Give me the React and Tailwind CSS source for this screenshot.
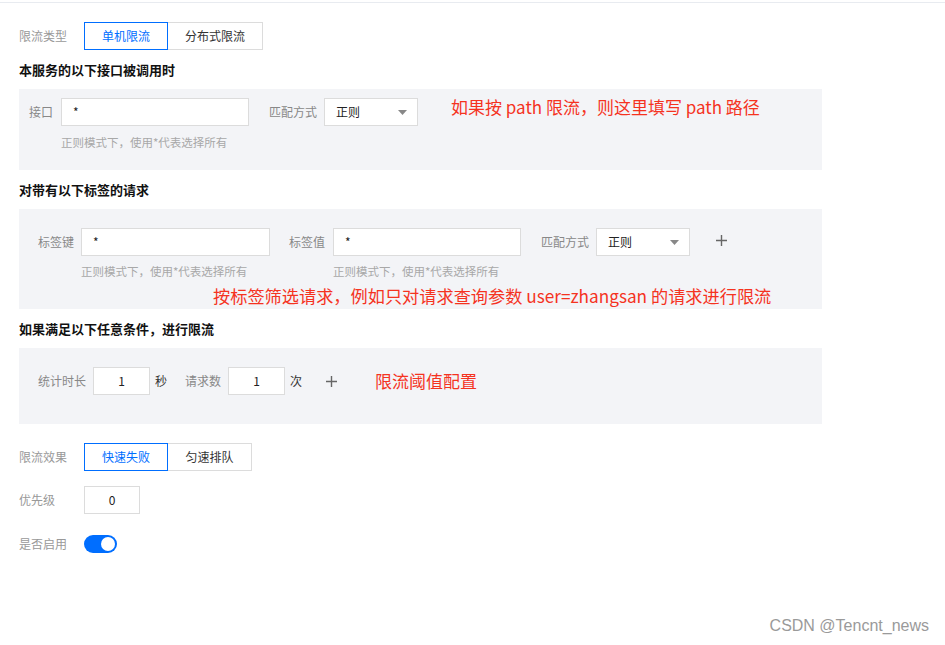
import React from 'react';

const FONT = { fontFamily: '"Noto Sans CJK SC", "Noto Sans", sans-serif' };

function Caret() {
  return (
    <svg width="9" height="5" viewBox="0 0 9 5" className="shrink-0">
      <path d="M0 0 L9 0 L4.5 5 Z" fill="#888" />
    </svg>
  );
}

function Plus({ className = '' }) {
  return (
    <svg width="11" height="11" viewBox="0 0 11 11" className={className}>
      <path d="M5.5 0 V11 M0 5.5 H11" stroke="#666" strokeWidth="1.4" />
    </svg>
  );
}

function TextInput({ w, value = '*', center = false }) {
  return (
    <div
      className={`h-[28px] ${w} bg-white border border-[#dcdcdc] flex items-center text-[12px] text-[#222] ${center ? 'justify-center' : 'pl-[11px]'}`}
    >
      {value}
    </div>
  );
}

function Select() {
  return (
    <div className="h-[28px] w-[94px] bg-white border border-[#dcdcdc] flex items-center justify-between pl-[11px] pr-[10px] text-[12px] text-[#222]">
      <span>正则</span>
      <Caret />
    </div>
  );
}

function Segmented({ items, widths }) {
  return (
    <div className="flex">
      {items.map((t, i) => (
        <div
          key={t}
          className={`h-[28px] ${widths[i]} flex items-center justify-center text-[12px] bg-white ${
            i === 0 ? 'border border-[#006eff] text-[#006eff]' : 'border border-l-0 border-[#dcdcdc] text-[#333]'
          }`}
        >
          {t}
        </div>
      ))}
    </div>
  );
}

function Heading({ children }) {
  return (
    <div className="h-[39px] flex items-center text-[13px] font-bold text-[#111]">{children}</div>
  );
}

const Hint = ({ className = '' }) => (
  <div className={`text-[11.5px] leading-[16px] text-[#a8a8a8] ${className}`}>正则模式下，使用*代表选择所有</div>
);

export default function App() {
  return (
    <div className="relative w-[945px] h-[645px] bg-white overflow-hidden" style={FONT}>
      <div className="mt-[2px] h-px bg-[#e8ebf0]" />

      <div className="px-[19px] w-[841px]">
        <div className="mt-[19px] flex items-center">
          <div className="w-[65px] text-[12px] text-[#999]">限流类型</div>
          <Segmented items={['单机限流', '分布式限流']} widths={['w-[84px]', 'w-[95px]']} />
        </div>

        <Heading>本服务的以下接口被调用时</Heading>

        <div className="relative h-[81px] bg-[#f3f4f7] pt-[9px] pl-[10px]">
          <div className="flex items-center">
            <div className="w-[32px] text-[12px] text-[#888]">接口</div>
            <TextInput w="w-[188px]" />
            <div className="ml-[20px] w-[55px] text-[12px] text-[#888]">匹配方式</div>
            <Select />
          </div>
          <Hint className="mt-[8px] ml-[32px]" />
          <div className="absolute left-[432px] top-[6px] text-[17px] leading-[24px] text-[#f5331f]">
            如果按 path 限流，则这里填写 path 路径
          </div>
        </div>

        <Heading>对带有以下标签的请求</Heading>

        <div className="relative h-[100px] bg-[#f3f4f7] pt-[19px] pl-[19px]">
          <div className="flex items-center">
            <div className="w-[43px] text-[12px] text-[#888]">标签键</div>
            <TextInput w="w-[189px]" />
            <div className="ml-[19px] w-[44px] text-[12px] text-[#888]">标签值</div>
            <TextInput w="w-[188px]" />
            <div className="ml-[20px] w-[55px] text-[12px] text-[#888]">匹配方式</div>
            <Select />
            <Plus className="ml-[26px] -mt-[4px]" />
          </div>
          <div className="flex mt-[7px]">
            <Hint className="ml-[43px] w-[252px]" />
            <Hint />
          </div>
          <div className="absolute left-[194px] top-[75px] text-[17.2px] leading-[24px] text-[#f5331f]">
            按标签筛选请求，例如只对请求查询参数 user=zhangsan 的请求进行限流
          </div>
        </div>

        <Heading>如果满足以下任意条件，进行限流</Heading>

        <div className="h-[76px] bg-[#f3f4f7] pt-[19px] pl-[19px]">
          <div className="flex items-center">
            <div className="w-[55px] text-[12px] text-[#888]">统计时长</div>
            <TextInput w="w-[57px]" value="1" center />
            <div className="ml-[5px] w-[30px] text-[12px] text-[#333]">秒</div>
            <div className="w-[43px] text-[12px] text-[#888]">请求数</div>
            <TextInput w="w-[57px]" value="1" center />
            <div className="ml-[5px] text-[12px] text-[#333]">次</div>
            <Plus className="ml-[24px]" />
            <div className="ml-[38px] text-[17px] leading-[24px] text-[#f5331f]">限流阈值配置</div>
          </div>
        </div>

        <div className="mt-[19px] flex items-center">
          <div className="w-[65px] text-[12px] text-[#999]">限流效果</div>
          <Segmented items={['快速失败', '匀速排队']} widths={['w-[84px]', 'w-[84px]']} />
        </div>

        <div className="mt-[15px] flex items-center">
          <div className="w-[65px] text-[12px] text-[#999]">优先级</div>
          <TextInput w="w-[56px]" value="0" center />
        </div>

        <div className="mt-[21px] flex items-center">
          <div className="w-[65px] text-[12px] text-[#999]">是否启用</div>
          <div className="w-[33px] h-[18px] rounded-full bg-[#006eff] flex items-center justify-end pr-[2px]">
            <div className="w-[14px] h-[14px] rounded-full bg-white" />
          </div>
        </div>
      </div>

      <div
        className="absolute right-[16px] bottom-[7px] text-[16px] text-[#9a9a9a]"
        style={{ fontFamily: '"Liberation Sans", Arial, sans-serif' }}
      >
        CSDN @Tencnt_news
      </div>
    </div>
  );
}
